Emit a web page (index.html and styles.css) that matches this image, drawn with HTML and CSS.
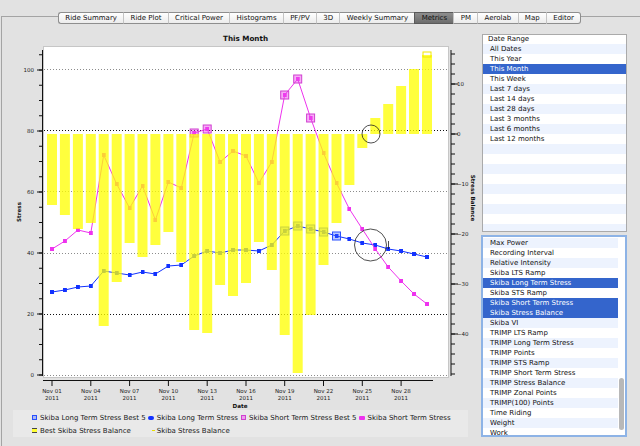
FILE: index.html
```html
<!DOCTYPE html>
<html>
<head>
<meta charset="utf-8">
<link rel="stylesheet" href="styles.css">
</head>
<body>
<div class="pane">
  <div class="tabs">
    <div class="tab first">Ride Summary</div>
    <div class="tab">Ride Plot</div>
    <div class="tab">Critical Power</div>
    <div class="tab">Histograms</div>
    <div class="tab">PF/PV</div>
    <div class="tab">3D</div>
    <div class="tab">Weekly Summary</div>
    <div class="tab selected">Metrics</div>
    <div class="tab">PM</div>
    <div class="tab">Aerolab</div>
    <div class="tab">Map</div>
    <div class="tab last">Editor</div>
  </div>
  <div class="content">
    <div class="chart-panel">
      <svg class="chart" width="476" height="382" viewBox="2 28 476 382">
        <defs>
          <marker id="mk-blue" viewBox="0 0 4 4" refX="2" refY="2" markerWidth="4" markerHeight="4" markerUnits="userSpaceOnUse"><rect width="4" height="4" class="mk-blue"/></marker>
          <marker id="mk-mag" viewBox="0 0 4 4" refX="2" refY="2" markerWidth="4" markerHeight="4" markerUnits="userSpaceOnUse"><rect width="4" height="4" class="mk-mag"/></marker>
        </defs>
        <text class="title" x="245.5" y="41">This Month</text>
        <rect class="canvas" x="43.5" y="46.5" width="405" height="331"/>
        <g class="grid-light">
          <line x1="44" y1="69.5" x2="448" y2="69.5"/>
          <line x1="44" y1="191.5" x2="448" y2="191.5"/>
          <line x1="44" y1="253.5" x2="448" y2="253.5"/>
          <line x1="44" y1="375.5" x2="448" y2="375.5"/>
        </g>
        <g class="grid-dark">
          <line x1="44" y1="130.5" x2="448" y2="130.5"/>
          <line x1="44" y1="314.5" x2="448" y2="314.5"/>
        </g>
        <line class="axis" x1="42.5" y1="50" x2="42.5" y2="376"/>
        <line class="ticks-minor" x1="40.5" y1="375.5" x2="40.5" y2="50" />
        <line class="ticks-major-l" x1="39.5" y1="375.5" x2="39.5" y2="60" />
        <g class="lbl lbl-l">
          <text x="34" y="71.5">100</text>
          <text x="34" y="132.5">80</text>
          <text x="34" y="193.5">60</text>
          <text x="34" y="254.5">40</text>
          <text x="34" y="315.5">20</text>
          <text x="34" y="376.5">0</text>
        </g>
        <text class="axis-title" transform="translate(20.5 212) rotate(-90)">Stress</text>
        <line class="axis" x1="451" y1="50" x2="451" y2="376"/>
        <line class="ticks-minor-r" x1="453" y1="374.5" x2="453" y2="50"/>
        <line class="ticks-major-r" x1="454.5" y1="334.5" x2="454.5" y2="60"/>
        <g class="lbl lbl-r">
          <text x="457" y="86">10</text>
          <text x="457" y="136">0</text>
          <text x="457" y="186">−10</text>
          <text x="457" y="236">−20</text>
          <text x="457" y="286">−30</text>
          <text x="457" y="336">−40</text>
        </g>
        <text class="axis-title" transform="translate(470.5 198) rotate(90)">Stress Balance</text>
        <line class="axis" x1="43" y1="380.5" x2="433" y2="380.5"/>
        <path class="xticks" d="M52 380v6M90.8 380v6M129.6 380v6M168.4 380v6M207.2 380v6M246 380v6M284.7 380v6M323.5 380v6M362.3 380v6M401.1 380v6"/>
        <g class="lbl lbl-x">
          <text x="52" y="393">Nov 01</text><text x="52" y="399.5">2011</text>
          <text x="90.8" y="393">Nov 04</text><text x="90.8" y="399.5">2011</text>
          <text x="129.6" y="393">Nov 07</text><text x="129.6" y="399.5">2011</text>
          <text x="168.4" y="393">Nov 10</text><text x="168.4" y="399.5">2011</text>
          <text x="207.2" y="393">Nov 13</text><text x="207.2" y="399.5">2011</text>
          <text x="246" y="393">Nov 16</text><text x="246" y="399.5">2011</text>
          <text x="284.7" y="393">Nov 19</text><text x="284.7" y="399.5">2011</text>
          <text x="323.5" y="393">Nov 22</text><text x="323.5" y="399.5">2011</text>
          <text x="362.3" y="393">Nov 25</text><text x="362.3" y="399.5">2011</text>
          <text x="401.1" y="393">Nov 28</text><text x="401.1" y="399.5">2011</text>
        </g>
        <text class="axis-title" x="240" y="407.5">Date</text>
        <polyline class="ln-blue" points="52,292 64.9,290 77.9,287 90.8,286 103.7,271 116.7,273 129.6,275 142.5,272 155.4,274 168.4,266 181.3,265 194.2,256 207.2,251 220.1,253 233,250 246,250 258.9,251 271.8,245 284.7,231 297.7,226 310.6,229 323.5,232 336.5,236 349.4,239 362.3,243 375.3,245 388.2,249 401.1,251 414,254 427,257"/>
        <polyline class="ln-mag" points="52,249 64.9,241 77.9,230 90.8,233 103.7,155 116.7,184 129.6,208 142.5,186 155.4,220 168.4,182 181.3,188 194.2,133 207.2,129 220.1,162 233,151 246,156 258.9,183 271.8,162 284.7,95 297.7,79 310.6,118 323.5,153 336.5,183 349.4,209 362.3,229 375.3,249 388.2,267 401.1,281 414,294 427,304"/>
        <g class="best-blue">
          <rect x="280.7" y="227" width="8" height="8"/>
          <rect x="293.7" y="222" width="8" height="8"/>
          <rect x="306.6" y="225" width="8" height="8"/>
          <rect x="319.5" y="228" width="8" height="8"/>
          <rect x="332.5" y="232" width="8" height="8"/>
        </g>
        <g class="best-mag">
          <rect x="190.2" y="129" width="8" height="8"/>
          <rect x="203.2" y="125" width="8" height="8"/>
          <rect x="280.7" y="91" width="8" height="8"/>
          <rect x="293.7" y="75" width="8" height="8"/>
          <rect x="306.6" y="114" width="8" height="8"/>
        </g>
        <g class="bars">
          <rect x="47" y="134" width="10" height="71"/>
          <rect x="59.9" y="134" width="10" height="81"/>
          <rect x="72.9" y="134" width="10" height="95"/>
          <rect x="85.8" y="134" width="10" height="89"/>
          <rect x="98.7" y="134" width="10" height="192"/>
          <rect x="111.7" y="134" width="10" height="148"/>
          <rect x="124.6" y="134" width="10" height="109"/>
          <rect x="137.5" y="134" width="10" height="123"/>
          <rect x="150.4" y="134" width="10" height="111"/>
          <rect x="163.4" y="134" width="10" height="98"/>
          <rect x="176.3" y="134" width="10" height="128"/>
          <rect x="189.2" y="134" width="10" height="196"/>
          <rect x="202.2" y="134" width="10" height="199"/>
          <rect x="215.1" y="134" width="10" height="151"/>
          <rect x="228" y="134" width="10" height="162"/>
          <rect x="241" y="134" width="10" height="149"/>
          <rect x="253.9" y="134" width="10" height="108"/>
          <rect x="266.8" y="134" width="10" height="136"/>
          <rect x="279.7" y="134" width="10" height="201"/>
          <rect x="292.7" y="134" width="10" height="239"/>
          <rect x="305.6" y="134" width="10" height="181"/>
          <rect x="318.5" y="134" width="10" height="131"/>
          <rect x="331.5" y="134" width="10" height="89"/>
          <rect x="344.4" y="134" width="10" height="51"/>
          <rect x="357.3" y="134" width="10" height="14"/>
          <rect x="370.3" y="118" width="10" height="16"/>
          <rect x="383.2" y="104" width="10" height="30"/>
          <rect x="396.1" y="86" width="10" height="48"/>
          <rect x="409" y="69" width="10" height="65"/>
          <rect x="422" y="55" width="10" height="79"/>
        </g>
        <rect class="best-yel" x="423" y="52" width="8" height="5"/>
        <g class="rings">
          <circle cx="370.5" cy="245" r="16"/>
          <circle cx="371" cy="134" r="9"/>
          <line x1="388.5" y1="241" x2="388.5" y2="249"/>
        </g>
      </svg>
      <div class="legend">
        <div class="lg-item"><span class="ico"><span class="sw sw-lts5"></span></span>Skiba Long Term Stress Best 5</div>
        <div class="lg-item"><span class="ico"><span class="sw sw-lts"></span></span>Skiba Long Term Stress</div>
        <div class="lg-item"><span class="ico"><span class="sw sw-sts5"></span></span>Skiba Short Term Stress Best 5</div>
        <div class="lg-item"><span class="ico"><span class="sw sw-sts"></span></span>Skiba Short Term Stress</div>
        <div class="lg-item"><span class="ico"><span class="sw sw-ssb5"></span></span>Best Skiba Stress Balance</div>
        <div class="lg-item"><span class="ico"><span class="sw sw-ssb"></span></span>Skiba Stress Balance</div>
      </div>
    </div>
    <div class="side">
      <div class="list list-top">
        <div class="list-head">Date Range</div>
        <div class="rows">
          <div class="row">All Dates</div>
          <div class="row">This Year</div>
          <div class="row sel">This Month</div>
          <div class="row">This Week</div>
          <div class="row">Last 7 days</div>
          <div class="row">Last 14 days</div>
          <div class="row">Last 28 days</div>
          <div class="row">Last 3 months</div>
          <div class="row">Last 6 months</div>
          <div class="row">Last 12 months</div>
        </div>
      </div>
      <div class="list list-bottom">
        <div class="rows">
          <div class="row">Max Power</div>
          <div class="row">Recording Interval</div>
          <div class="row">Relative Intensity</div>
          <div class="row">Skiba LTS Ramp</div>
          <div class="row sel">Skiba Long Term Stress</div>
          <div class="row">Skiba STS Ramp</div>
          <div class="row sel">Skiba Short Term Stress</div>
          <div class="row sel">Skiba Stress Balance</div>
          <div class="row">Skiba VI</div>
          <div class="row">TRIMP LTS Ramp</div>
          <div class="row">TRIMP Long Term Stress</div>
          <div class="row">TRIMP Points</div>
          <div class="row">TRIMP STS Ramp</div>
          <div class="row">TRIMP Short Term Stress</div>
          <div class="row">TRIMP Stress Balance</div>
          <div class="row">TRIMP Zonal Points</div>
          <div class="row">TRIMP(100) Points</div>
          <div class="row">Time Riding</div>
          <div class="row">Weight</div>
          <div class="row">Work</div>
        </div>
        <div class="scrollbar"><div class="thumb"></div></div>
      </div>
    </div>
  </div>
</div>
</body>
</html>
```

FILE: styles.css
```css
html, body {
  margin: 0;
  padding: 0;
}
body {
  width: 640px;
  height: 446px;
  overflow: hidden;
  background: #e2e2e2;
  font-family: "DejaVu Sans", "Noto Sans", sans-serif;
  font-size: 7px;
  color: #111;
}
.pane {
  margin: 16px 0 0 1px;
  border-top: 1px solid #a4a4a4;
  border-left: 1px solid #a4a4a4;
  height: 429px;
}
.tabs {
  display: flex;
  margin: -5px 0 0 56px;
  height: 12px;
}
.tab {
  box-sizing: border-box;
  height: 12px;
  line-height: 10px;
  padding: 0 6.3px;
  border-top: 1px solid #8e8e8e;
  border-bottom: 1px solid #8e8e8e;
  border-left: 1px solid #c4c4c4;
  background: linear-gradient(#ffffff, #ececec);
  white-space: nowrap;
}
.tab.first {
  border-left: 1px solid #8e8e8e;
  border-radius: 3px 0 0 3px;
}
.tab.last {
  border-right: 1px solid #8e8e8e;
  border-radius: 0 3px 3px 0;
}
.tab.selected {
  background: linear-gradient(#8e8e8e, #6c6c6c);
  border-color: #5a5a5a;
  color: #111;
}
.content {
  display: flex;
  margin-top: 4px;
}
.chart-panel {
  width: 477px;
  flex: none;
}
.chart {
  display: block;
}
.title {
  font-family: "DejaVu Sans", sans-serif;
  font-weight: bold;
  font-size: 7.2px;
  text-anchor: middle;
  fill: #111;
}
.canvas {
  fill: #ffffff;
  stroke: #c6c6c6;
  stroke-width: 1;
}
.grid-light line {
  stroke: #8c8c8c;
  stroke-width: 1;
  stroke-dasharray: 1 2;
}
.grid-dark line {
  stroke: #111;
  stroke-width: 1;
  stroke-dasharray: 1 2;
}
.axis {
  stroke: #111;
  stroke-width: 1;
}
.ticks-minor {
  stroke: #111;
  stroke-width: 3;
  stroke-dasharray: 1 14.25;
}
.ticks-major-l {
  stroke: #111;
  stroke-width: 5;
  stroke-dasharray: 1 60;
}
.ticks-minor-r {
  stroke: #111;
  stroke-width: 4;
  stroke-dasharray: 1 9;
}
.ticks-major-r {
  stroke: #111;
  stroke-width: 7;
  stroke-dasharray: 1 49;
}
.xticks {
  stroke: #111;
  stroke-width: 1;
}
.lbl text {
  font-family: "DejaVu Sans", sans-serif;
  font-size: 5.5px;
  fill: #222;
}
.lbl-l text {
  text-anchor: end;
}
.lbl-x text {
  text-anchor: middle;
}
.axis-title {
  font-family: "DejaVu Sans", sans-serif;
  font-weight: bold;
  font-size: 5.6px;
  text-anchor: middle;
  fill: #111;
}
.ln-blue {
  fill: none;
  stroke: #1232ff;
  stroke-width: 1;
  marker-start: url(#mk-blue);
  marker-mid: url(#mk-blue);
  marker-end: url(#mk-blue);
}
.ln-mag {
  fill: none;
  stroke: #ee33ee;
  stroke-width: 1;
  marker-start: url(#mk-mag);
  marker-mid: url(#mk-mag);
  marker-end: url(#mk-mag);
}
.mk-blue {
  fill: #1232ff;
}
.mk-mag {
  fill: #ee33ee;
}
.best-blue rect {
  fill: rgba(60, 100, 255, 0.35);
  stroke: #2a50ff;
  stroke-width: 1;
}
.best-mag rect {
  fill: rgba(238, 70, 238, 0.45);
  stroke: #d040d0;
  stroke-width: 1;
}
.bars rect {
  fill: #ffff00;
  fill-opacity: 0.76;
}
.best-yel {
  fill: none;
  stroke: #f2e800;
  stroke-width: 1;
}
.rings circle,
.rings line {
  fill: none;
  stroke: #222;
  stroke-width: 0.8;
}
.legend {
  display: grid;
  grid-template-columns: repeat(4, auto);
  justify-content: start;
  column-gap: 2px;
  margin-left: 11px;
  width: 455px;
  box-sizing: border-box;
  padding: 1px 0 0 18px;
  height: 27px;
  background: #e9e9e9;
}
.lg-item {
  display: flex;
  align-items: center;
  height: 13px;
  white-space: nowrap;
  color: #1a1a1a;
}
.ico {
  width: 7px;
  margin-right: 2px;
  display: flex;
  justify-content: center;
  align-items: center;
}
.sw {
  display: block;
  box-sizing: border-box;
}
.sw-lts5 {
  width: 5px;
  height: 5px;
  border: 1px solid #2a50ff;
  background: rgba(60, 100, 255, 0.35);
}
.sw-lts {
  width: 6px;
  height: 4px;
  border-radius: 2px;
  background: #1232ff;
}
.sw-sts5 {
  width: 5px;
  height: 5px;
  border: 1px solid #d040d0;
  background: rgba(238, 70, 238, 0.45);
}
.sw-sts {
  width: 6px;
  height: 4px;
  border-radius: 1px;
  background: #ee33ee;
}
.sw-ssb5 {
  width: 5px;
  height: 5px;
  border-top: 1px solid #444;
  border-bottom: 1px solid #444;
  background: #ffff33;
}
.sw-ssb {
  width: 3px;
  height: 1px;
  margin-left: 4px;
  background: #e8e000;
}
.side {
  flex: 1;
  display: flex;
  flex-direction: column;
}
.list {
  box-sizing: border-box;
  background: #ffffff;
}
.list-top {
  margin: 6px 0 0 3px;
  width: 145px;
  height: 198px;
  border: 1px solid #aaaaaa;
  display: flex;
  flex-direction: column;
}
.list-head {
  height: 9px;
  line-height: 9px;
  padding-left: 5px;
  flex: none;
}
.rows {
  flex: 1;
  background: repeating-linear-gradient(#edf3fe 0, #edf3fe 10px, #ffffff 10px, #ffffff 20px);
}
.row {
  height: 10px;
  line-height: 10px;
  padding-left: 7px;
  white-space: nowrap;
  overflow: hidden;
}
.row.sel {
  background: #3465cc;
  color: #ffffff;
}
.list-bottom {
  margin: 3px 0 0 2px;
  width: 146px;
  height: 202px;
  border: 2px solid #8db3e6;
  padding-top: 1px;
  display: flex;
  overflow: hidden;
}
.list-bottom .rows {
  flex: 1;
}
.scrollbar {
  width: 7px;
  flex: none;
  background: #ffffff;
}
.thumb {
  margin: 140px 0 0 1px;
  width: 5px;
  height: 52px;
  border-radius: 3px;
  background: #b8b8b8;
}
```
